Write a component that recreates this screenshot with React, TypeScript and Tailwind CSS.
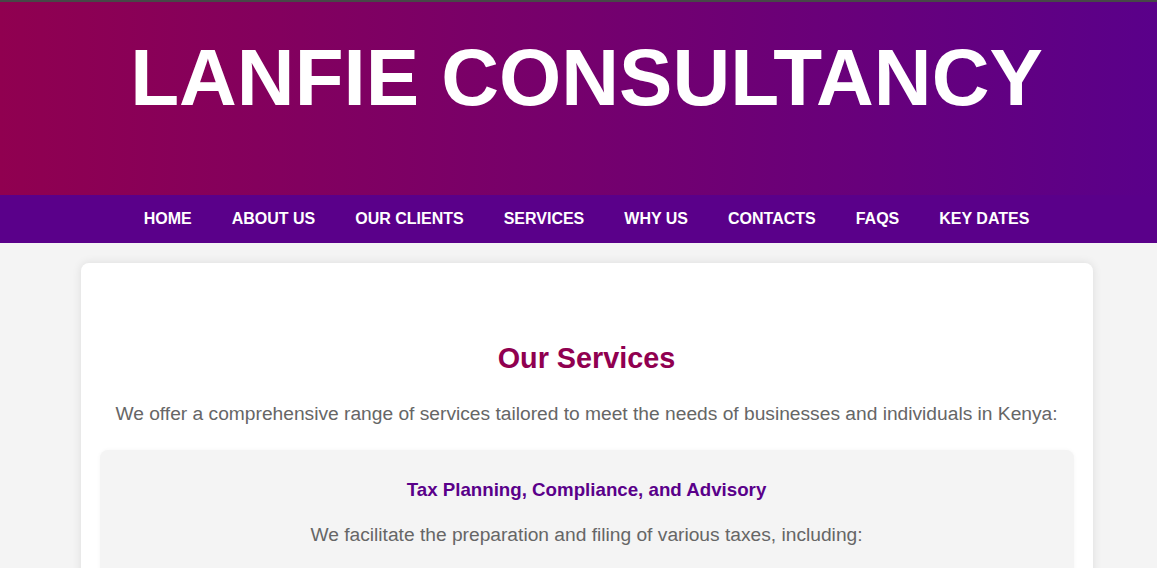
/* Lanfie Consultancy - services page */

const navItems = ["HOME", "ABOUT US", "OUR CLIENTS", "SERVICES", "WHY US", "CONTACTS", "FAQS", "KEY DATES"]

export default function App() {
  return (
    <div className="min-h-screen bg-[#f4f4f4] font-['Liberation_Sans',Arial,sans-serif] overflow-hidden">
      <header className="h-[195px] border-t-2 border-[#474747] bg-linear-to-r/srgb from-[#900050] to-[#5a008a] pl-4 pt-[36px]">
        <h1 className="text-center text-[80px] font-bold leading-none text-white">LANFIE CONSULTANCY</h1>
      </header>

      <nav className="h-12 bg-[#5a008a] pl-4 flex items-center justify-center">
        {navItems.map((item) => (
          <a key={item} href="#" className="px-5 text-base font-bold text-white">{item}</a>
        ))}
      </nav>

      <main className="pl-4 pt-5">
        <section className="w-[1012px] mx-auto bg-white rounded-lg shadow-[0_0_10px_rgba(0,0,0,0.1)] px-[19px] pt-[74px] pb-10">
          <h2 className="text-center text-[28.8px] font-bold leading-normal text-[#900050]">Our Services</h2>
          <p className="mt-5 text-center text-[19.2px] leading-normal text-[#666]">
            We offer a comprehensive range of services tailored to meet the needs of businesses and individuals in Kenya:
          </p>

          <div className="mt-[21px] bg-[#f4f4f4] rounded-lg shadow-[0_0_4px_rgba(0,0,0,0.04)] px-5 pt-[26px] pb-16">
            <h3 className="text-center text-[18.72px] font-bold leading-normal text-[#5a008a]">Tax Planning, Compliance, and Advisory</h3>
            <p className="mt-[17px] text-center text-[19.2px] leading-normal text-[#666]">
              We facilitate the preparation and filing of various taxes, including:
            </p>
          </div>
        </section>
      </main>
    </div>
  )
}
